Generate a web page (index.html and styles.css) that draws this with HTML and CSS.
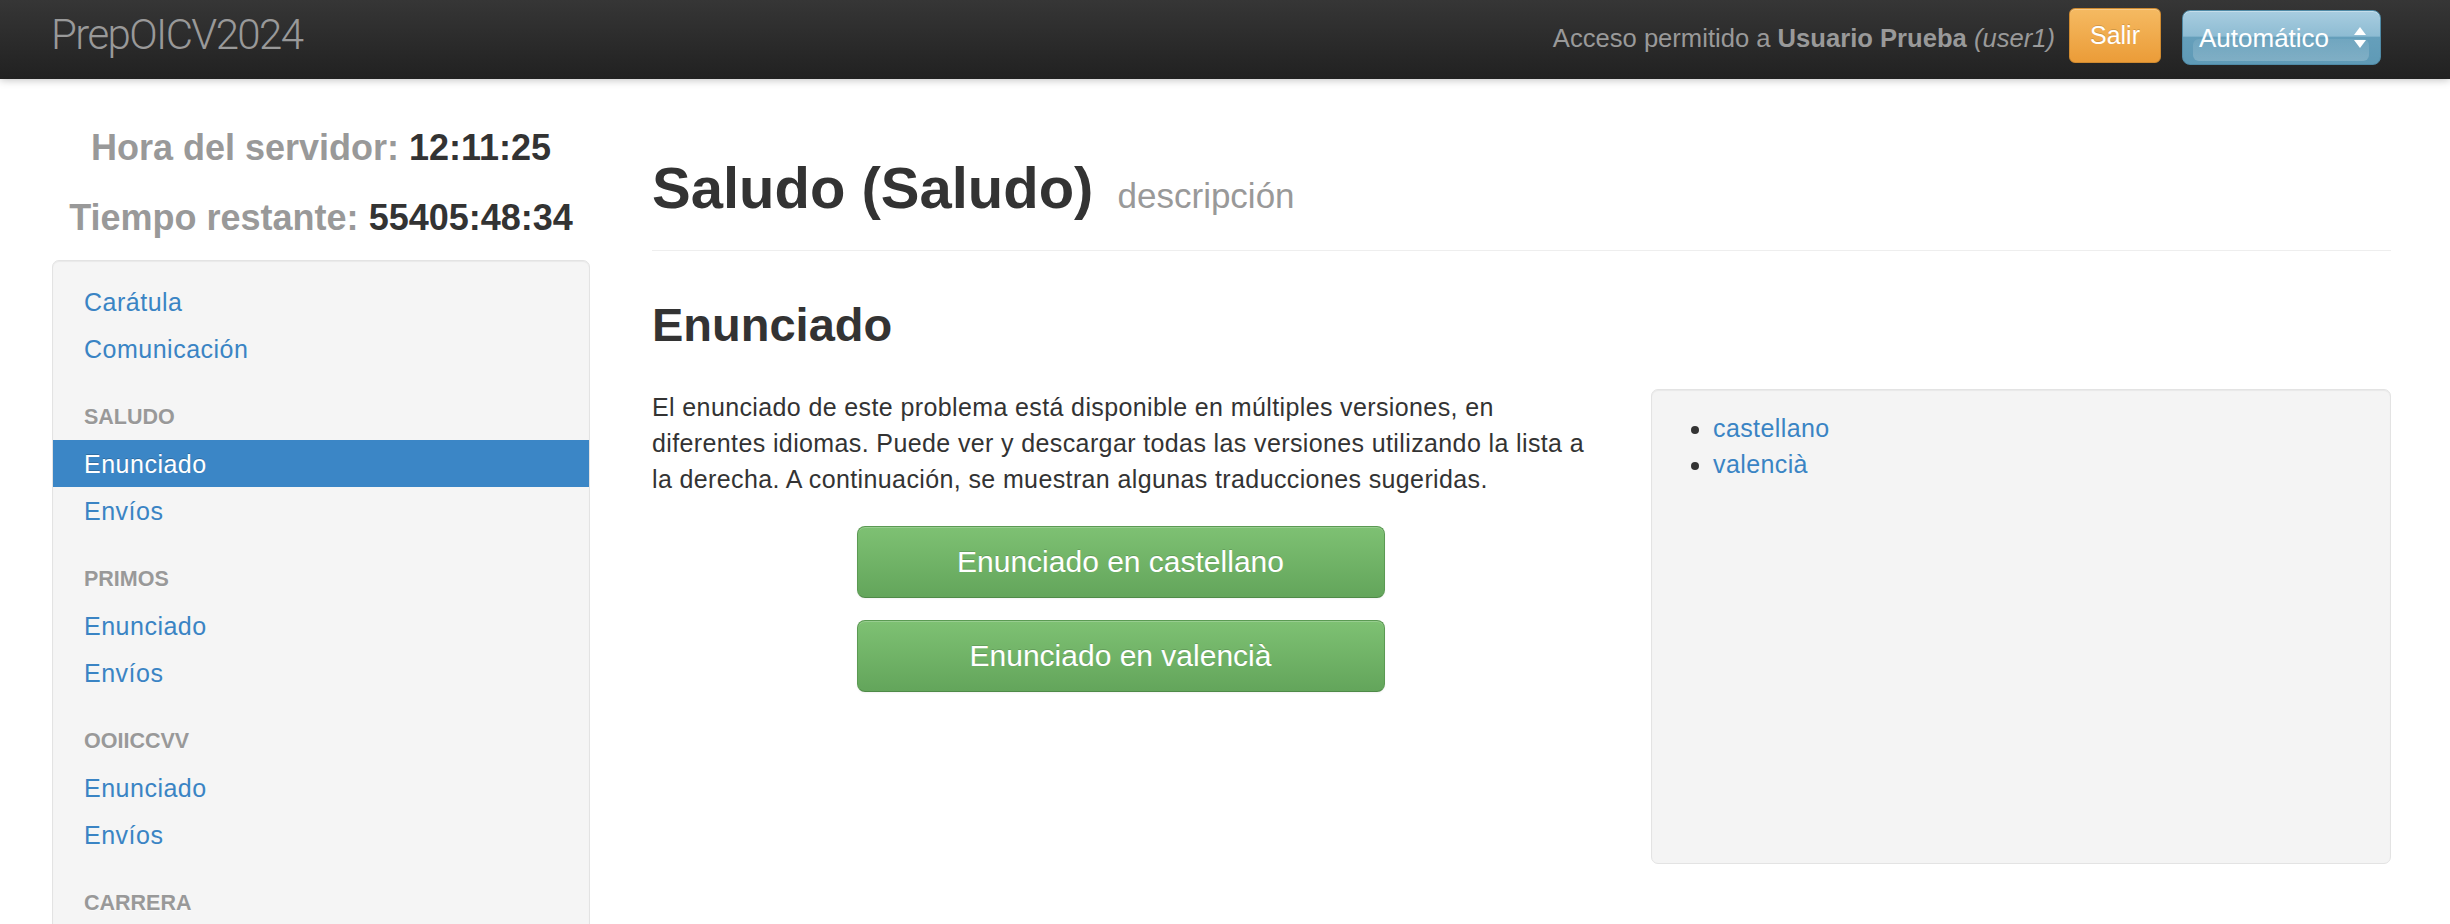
FILE: index.html
```html
<!DOCTYPE html>
<html lang="es">
<head>
<meta charset="utf-8">
<title>PrepOICV2024</title>
<link rel="stylesheet" href="styles.css">
</head>
<body>
<header class="navbar">
  <a class="brand" href="#">PrepOICV2024</a>
  <div class="nav-right">
    <p class="login">Acceso permitido a <strong>Usuario Prueba</strong> <em>(user1)</em></p>
    <button class="btn-salir" type="button">Salir</button>
    <div class="theme-select">
      <span class="theme-label">Automático</span>
      <svg class="theme-arrows" width="12" height="21" viewBox="0 0 12 21" aria-hidden="true">
        <polygon points="6,0 12,8 0,8" fill="#fff"/>
        <polygon points="0,13 12,13 6,21" fill="#fff"/>
      </svg>
    </div>
  </div>
</header>

<div class="layout">
  <aside class="sidebar">
    <p class="clock">Hora del servidor: <b>12:11:25</b></p>
    <p class="clock">Tiempo restante: <b>55405:48:34</b></p>
    <nav class="well nav-list">
      <ul>
        <li><a href="#">Carátula</a></li>
        <li><a href="#">Comunicación</a></li>
        <li class="nav-header">Saludo</li>
        <li class="active"><a href="#">Enunciado</a></li>
        <li><a href="#">Envíos</a></li>
        <li class="nav-header">Primos</li>
        <li><a href="#">Enunciado</a></li>
        <li><a href="#">Envíos</a></li>
        <li class="nav-header">OOIICCVV</li>
        <li><a href="#">Enunciado</a></li>
        <li><a href="#">Envíos</a></li>
        <li class="nav-header">Carrera</li>
      </ul>
    </nav>
  </aside>

  <main class="content">
    <div class="page-header">
      <h1>Saludo (Saludo) <small>descripción</small></h1>
    </div>
    <h2>Enunciado</h2>
    <div class="statement-row">
      <div class="statement-main">
        <p>El enunciado de este problema está disponible en múltiples versiones, en diferentes idiomas. Puede ver y descargar todas las versiones utilizando la lista a la derecha. A continuación, se muestran algunas traducciones sugeridas.</p>
        <div class="btn-stack">
          <a class="btn-success" href="#">Enunciado en castellano</a>
          <a class="btn-success" href="#">Enunciado en valencià</a>
        </div>
      </div>
      <div class="well lang-box">
        <ul>
          <li><a href="#">castellano</a></li>
          <li><a href="#">valencià</a></li>
        </ul>
      </div>
    </div>
  </main>
</div>
</body>
</html>
```

FILE: styles.css
```css
html, body {
  margin: 0;
  height: 924px;
  overflow: hidden;
}
body {
  font-family: "Liberation Sans", Arial, sans-serif;
  font-size: 25px;
  line-height: 36px;
  color: #333;
  background: #fff;
}
a {
  color: #3a84c4;
  text-decoration: none;
}
p { margin: 0; }

/* Navbar */
.navbar {
  position: relative;
  z-index: 2;
  box-sizing: border-box;
  height: 79px;
  padding: 0 69px 4px 51px;
  display: flex;
  align-items: center;
  background: linear-gradient(#363636, #212121);
  box-shadow: 0 1px 8px rgba(0, 0, 0, 0.25);
}
.brand {
  font-family: Roboto, "Liberation Sans", sans-serif;
  font-weight: 300;
  font-size: 42px;
  line-height: 42px;
  letter-spacing: -1.6px;
  color: #999;
  margin-bottom: 6px;
}
.nav-right {
  margin-left: auto;
  display: flex;
  align-items: center;
}
.login {
  color: #999;
  font-size: 25.6px;
  margin-right: 14px;
}
.login strong { font-weight: bold; }
.login em { font-style: italic; }
.btn-salir {
  box-sizing: border-box;
  height: 55px;
  padding: 0 20px;
  margin-bottom: 4px;
  font-family: inherit;
  font-size: 25px;
  line-height: 53px;
  color: #fff;
  background: linear-gradient(#f5ba62, #eb9c38);
  border: 1px solid #cf8a30;
  border-radius: 6px;
  text-shadow: 0 -1px 0 rgba(0, 0, 0, 0.15);
  box-shadow: inset 0 1px 0 rgba(255, 255, 255, 0.25);
}
.theme-select {
  position: relative;
  box-sizing: border-box;
  width: 199px;
  height: 55px;
  margin-left: 21px;
  padding: 0 14px 0 16px;
  display: flex;
  align-items: center;
  justify-content: space-between;
  color: #fff;
  font-size: 26px;
  border: 1px solid #4f8aa6;
  border-radius: 8px;
  background: linear-gradient(#a8cde0 0%, #8ebcd3 47%, #659fbb 50%, #5f9ab6 100%);
  box-shadow: inset 0 1px 0 rgba(255, 255, 255, 0.35);
}
.theme-select::after {
  content: "";
  position: absolute;
  left: 10px;
  right: 11px;
  top: 28px;
  bottom: 3px;
  border-radius: 6px;
  background: linear-gradient(rgba(255, 255, 255, 0.08), rgba(255, 255, 255, 0.2));
}
.theme-label, .theme-arrows { position: relative; z-index: 1; }
.theme-arrows { display: block; }

/* Layout */
.layout {
  display: grid;
  grid-template-columns: 538px 1fr;
  column-gap: 62px;
  padding: 0 59px 0 52px;
}

/* Sidebar */
.sidebar { padding-top: 51px; }
.clock {
  text-align: center;
  font-size: 36px;
  line-height: 36px;
  font-weight: bold;
  color: #999;
}
.clock b { color: #333; }
.clock + .clock { margin-top: 34px; }

.well {
  box-sizing: border-box;
  background: #f5f5f5;
  border: 1px solid #e3e3e3;
  border-radius: 7px;
  box-shadow: inset 0 1px 1px rgba(0, 0, 0, 0.05);
}
.nav-list {
  margin-top: 24px;
  padding: 17px 0 60px;
}
.nav-list ul {
  list-style: none;
  margin: 0;
  padding: 0;
}
.nav-list li a {
  display: block;
  padding: 5.5px 31px;
  line-height: 36px;
  letter-spacing: 0.5px;
}
.nav-list .nav-header {
  margin-top: 21px;
  padding: 5.5px 31px;
  font-size: 21.5px;
  line-height: 36px;
  font-weight: bold;
  text-transform: uppercase;
  color: #999;
  text-shadow: 0 1px 0 rgba(255, 255, 255, 0.5);
}
.nav-list .active a {
  background: #3b86c6;
  color: #fff;
  text-shadow: 0 -1px 0 rgba(0, 0, 0, 0.2);
}

/* Content */
.page-header {
  padding-bottom: 26px;
  border-bottom: 1px solid #eee;
}
h1 {
  margin: 73px 0 0;
  font-size: 58px;
  line-height: 72px;
  font-weight: bold;
  color: #333;
}
h1 small {
  margin-left: 8px;
  font-size: 35px;
  line-height: 36px;
  font-weight: normal;
  color: #999;
}
h2 {
  margin: 46px 0 0;
  font-size: 47px;
  line-height: 56px;
  font-weight: bold;
}
.statement-row {
  margin-top: 36px;
  display: grid;
  grid-template-columns: 1fr 740px;
  column-gap: 56px;
  align-items: start;
}
.statement-main p { letter-spacing: 0.38px; }
.btn-stack {
  margin-top: 29px;
  padding-right: 6px;
  display: flex;
  flex-direction: column;
  align-items: center;
  gap: 22px;
}
.btn-success {
  box-sizing: border-box;
  display: block;
  width: 528px;
  height: 72px;
  padding: 17px 10px;
  font-size: 30px;
  line-height: 36px;
  text-align: center;
  color: #fff;
  background: linear-gradient(#7ec173, #63a55b);
  border: 1px solid #5b9a53;
  border-bottom-color: #4f8a48;
  border-radius: 8px;
  text-shadow: 0 -1px 0 rgba(0, 0, 0, 0.15);
  box-shadow: inset 0 1px 0 rgba(255, 255, 255, 0.2), 0 1px 2px rgba(0, 0, 0, 0.05);
}
.lang-box {
  height: 475px;
  padding: 20px;
  background: #f4f4f4;
}
.lang-box ul {
  margin: 0;
  padding-left: 41px;
}
.lang-box li { line-height: 36px; letter-spacing: 0.4px; }
```
